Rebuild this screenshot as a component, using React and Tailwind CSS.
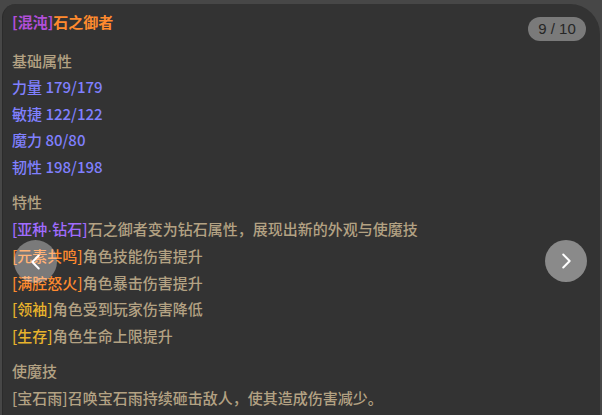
import React from "react";

function ChevronL() {
  return (
    <svg width="22" height="22" viewBox="0 0 24 24" fill="none" stroke="white" strokeWidth="2.2" strokeLinecap="round" strokeLinejoin="round">
      <path d="M15 5l-7 7 7 7" />
    </svg>
  );
}
function ChevronR() {
  return (
    <svg width="22" height="22" viewBox="0 0 24 24" fill="none" stroke="white" strokeWidth="2.2" strokeLinecap="round" strokeLinejoin="round">
      <path d="M9 5l7 7-7 7" />
    </svg>
  );
}

const tan = "text-[#b3a283]";

export default function App() {
  return (
    <div
      className="w-[602px] h-[415px] bg-[#474747] overflow-hidden flex"
      style={{ fontFamily: '"Noto Sans CJK SC", "Liberation Sans", sans-serif' }}
    >
      <div className="relative mt-[4px] ml-[2px] w-[598px] h-[411px] bg-[#333333] rounded-tl-[14px] rounded-tr-[30px] border-l-[1px] border-[#2b2b2b] text-[15px] leading-[26.5px] pl-[9px] pr-[11px] pt-[5px] font-medium">
        <div className="absolute right-[14px] top-[13px] h-[24px] w-[58px] rounded-full bg-[#7a7a7a] text-[#262626] text-[15px] leading-[24px] text-center font-normal" style={{ fontFamily: '"Liberation Sans", sans-serif' }}>
          9 / 10
        </div>
        <div className="font-bold">
          <span className="text-[#b14fd8]">[混沌]</span>
          <span className="text-[#ff8a2e]">石之御者</span>
        </div>

        <div className="mt-[12px]">
          <div className={tan}>基础属性</div>
          <div className="text-[#8080ff]">力量 179/179</div>
          <div className="text-[#8080ff]">敏捷 122/122</div>
          <div className="text-[#8080ff]">魔力 80/80</div>
          <div className="text-[#8080ff]">韧性 198/198</div>
        </div>

        <div className="mt-[9px]">
          <div className={tan}>特性</div>
          <div className={tan}>
            <span className="text-[#a06cff]">[亚种<span style={{ fontFamily: '"Liberation Sans", sans-serif' }}>·</span>钻石]</span>石之御者变为钻石属性，展现出新的外观与使魔技
          </div>
          <div className={tan}>
            <span className="text-[#ff8a2e]">[元素共鸣]</span>角色技能伤害提升
          </div>
          <div className={tan}>
            <span className="text-[#ff8a2e]">[满腔怒火]</span>角色暴击伤害提升
          </div>
          <div className={tan}>
            <span className="text-[#e8b32c]">[领袖]</span>角色受到玩家伤害降低
          </div>
          <div className={tan}>
            <span className="text-[#e8b32c]">[生存]</span>角色生命上限提升
          </div>
        </div>

        <div className="mt-[9px]">
          <div className={tan}>使魔技</div>
          <div className={tan}>[宝石雨]召唤宝石雨持续砸击敌人，使其造成伤害减少。</div>
        </div>

        <div className="absolute left-[11px] top-[236px] w-[43px] h-[43px] rounded-full bg-white/35 flex items-center justify-center">
          <ChevronL />
        </div>
        <div className="absolute right-[13px] top-[236px] w-[42px] h-[42px] rounded-full bg-[#8a8a8a] flex items-center justify-center">
          <ChevronR />
        </div>
      </div>
    </div>
  );
}
